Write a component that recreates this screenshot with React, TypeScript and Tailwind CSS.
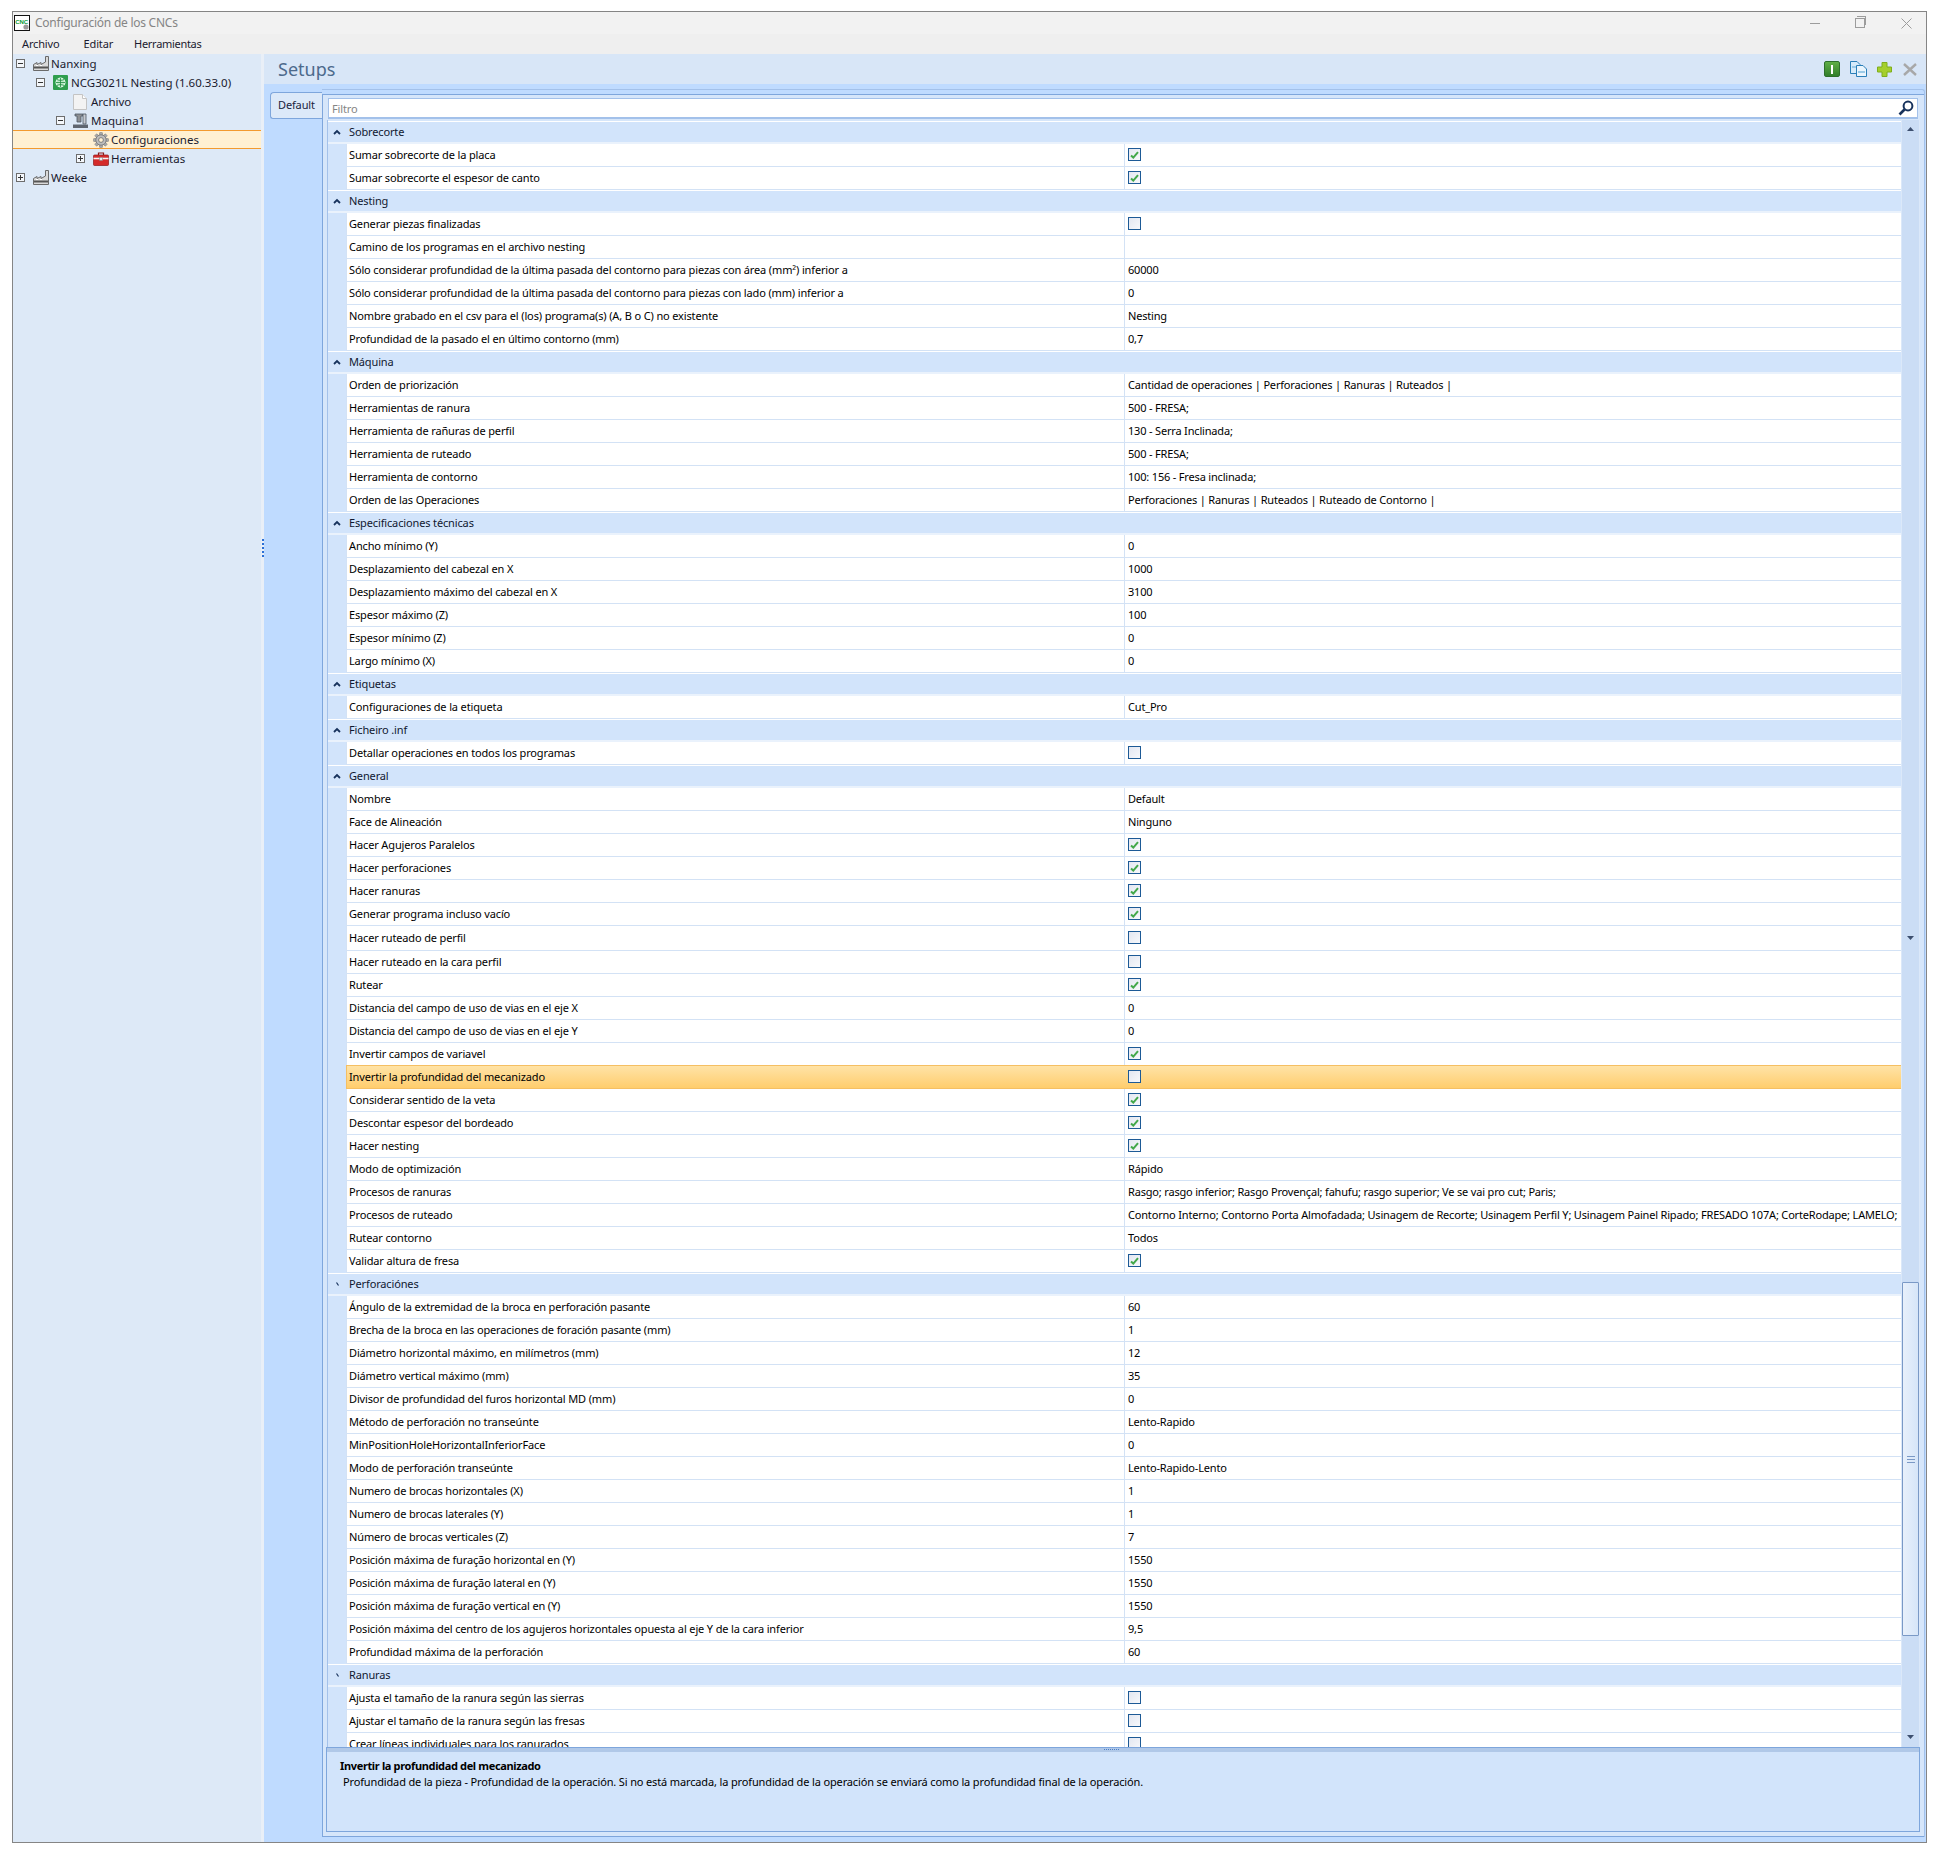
import React from "react";

type Row = [string, string | boolean, boolean?];

const sections: { title: string; open?: boolean; rows: Row[] }[] = [
  { title: "Sobrecorte", open: true, rows: [
    ["Sumar sobrecorte de la placa", true],
    ["Sumar sobrecorte el espesor de canto", true],
  ]},
  { title: "Nesting", open: true, rows: [
    ["Generar piezas finalizadas", false],
    ["Camino de los programas en el archivo nesting", ""],
    ["Sólo considerar profundidad de la última pasada del contorno para piezas con área (mm²) inferior a", "60000"],
    ["Sólo considerar profundidad de la última pasada del contorno para piezas con lado (mm) inferior a", "0"],
    ["Nombre grabado en el csv para el (los) programa(s) (A, B o C) no existente", "Nesting"],
    ["Profundidad de la pasado el en último contorno (mm)", "0,7"],
  ]},
  { title: "Máquina", open: true, rows: [
    ["Orden de priorización", "Cantidad de operaciones | Perforaciones | Ranuras | Ruteados |"],
    ["Herramientas de ranura", "500 - FRESA;"],
    ["Herramienta de rañuras de perfil", "130 - Serra Inclinada;"],
    ["Herramienta de ruteado", "500 - FRESA;"],
    ["Herramienta de contorno", "100: 156 - Fresa inclinada;"],
    ["Orden de las Operaciones", "Perforaciones | Ranuras | Ruteados | Ruteado de Contorno |"],
  ]},
  { title: "Especificaciones técnicas", open: true, rows: [
    ["Ancho mínimo (Y)", "0"],
    ["Desplazamiento del cabezal en X", "1000"],
    ["Desplazamiento máximo del cabezal en X", "3100"],
    ["Espesor máximo (Z)", "100"],
    ["Espesor mínimo (Z)", "0"],
    ["Largo mínimo (X)", "0"],
  ]},
  { title: "Etiquetas", open: true, rows: [["Configuraciones de la etiqueta", "Cut_Pro"]] },
  { title: "Ficheiro .inf", open: true, rows: [["Detallar operaciones en todos los programas", false]] },
  { title: "General", open: true, rows: [
    ["Nombre", "Default"],
    ["Face de Alineación", "Ninguno"],
    ["Hacer Agujeros Paralelos", true],
    ["Hacer perforaciones", true],
    ["Hacer ranuras", true],
    ["Generar programa incluso vacío", true],
    ["Hacer ruteado de perfil", false, true],
    ["Hacer ruteado en la cara perfil", false],
    ["Rutear", true],
    ["Distancia del campo de uso de vias en el eje X", "0"],
    ["Distancia del campo de uso de vias en el eje Y", "0"],
    ["Invertir campos de variavel", true],
    ["Invertir la profundidad del mecanizado", false],
    ["Considerar sentido de la veta", true],
    ["Descontar espesor del bordeado", true],
    ["Hacer nesting", true],
    ["Modo de optimización", "Rápido"],
    ["Procesos de ranuras", "Rasgo; rasgo inferior; Rasgo Provençal; fahufu; rasgo superior; Ve se vai pro cut; Paris;"],
    ["Procesos de ruteado", "Contorno Interno; Contorno Porta Almofadada; Usinagem de Recorte; Usinagem Perfil Y; Usinagem Painel Ripado; FRESADO 107A; CorteRodape; LAMELO;"],
    ["Rutear contorno", "Todos"],
    ["Validar altura de fresa", true],
  ]},
  { title: "Perforaciónes", rows: [
    ["Ángulo de la extremidad de la broca en perforación pasante", "60"],
    ["Brecha de la broca en las operaciones de foración pasante (mm)", "1"],
    ["Diámetro horizontal máximo, en milímetros (mm)", "12"],
    ["Diámetro vertical máximo (mm)", "35"],
    ["Divisor de profundidad del furos horizontal MD (mm)", "0"],
    ["Método de perforación no transeúnte", "Lento-Rapido"],
    ["MinPositionHoleHorizontalInferiorFace", "0"],
    ["Modo de perforación transeúnte", "Lento-Rapido-Lento"],
    ["Numero de brocas horizontales (X)", "1"],
    ["Numero de brocas laterales (Y)", "1"],
    ["Número de brocas verticales (Z)", "7"],
    ["Posición máxima de furação horizontal en (Y)", "1550"],
    ["Posición máxima de furação lateral en (Y)", "1550"],
    ["Posición máxima de furação vertical en (Y)", "1550"],
    ["Posición máxima del centro de los agujeros horizontales opuesta al eje Y de la cara inferior", "9,5"],
    ["Profundidad máxima de la perforación", "60"],
  ]},
  { title: "Ranuras", rows: [
    ["Ajusta el tamaño de la ranura según las sierras", false],
    ["Ajustar el tamaño de la ranura según las fresas", false],
    ["Crear líneas individuales para los ranurados", false],
  ]},
];

const SELECTED = "Invertir la profundidad del mecanizado";

function Expander({ open }: { open?: boolean }) {
  return (
    <span className="w-[9px] h-[9px] border border-[#6d6d6d] bg-[#f4f7fb] flex items-center justify-center relative shrink-0">
      <span className="w-[5px] h-px bg-[#333]" />
      {!open && <span className="absolute w-px h-[5px] bg-[#333]" />}
    </span>
  );
}

function Factory() {
  return (
    <svg width="16" height="15" viewBox="0 0 16 15" className="shrink-0">
      <path d="M0.5 14.5V8.5L4 6.5V8.5L8 6.5V8.5L12.5 6V0.5H15.5V14.5Z" fill="#d9d9d9" stroke="#6a6a6a" />
      <path d="M1 11.5H15" stroke="#555" strokeWidth="2" />
      <path d="M3 9.5h2M7 9.5h2" stroke="#fff" />
    </svg>
  );
}

function MachineGreen() {
  return (
    <svg width="15" height="15" viewBox="0 0 15 15" className="shrink-0">
      <rect width="15" height="15" rx="1" fill="#2f9e4f" />
      <circle cx="7.5" cy="7.5" r="4.5" fill="#bfeccb" stroke="#e8fff0" />
      <path d="M3 7.5h9M7.5 3v9M4 4.5c2 1.2 5 1.2 7 0M4 10.5c2-1.2 5-1.2 7 0" stroke="#1f8a40" fill="none" strokeWidth="0.8" />
    </svg>
  );
}

function Doc() {
  return (
    <svg width="14" height="16" viewBox="0 0 14 16" className="shrink-0">
      <path d="M0.5 0.5H9.5L13.5 4.5V15.5H0.5Z" fill="#f3f3f3" stroke="#c4c4c4" />
      <path d="M9.5 0.5V4.5H13.5" fill="#fff" stroke="#c4c4c4" />
    </svg>
  );
}

function Machine() {
  return (
    <svg width="15" height="15" viewBox="0 0 15 15" className="shrink-0">
      <path d="M2 1h8v2H8v6H4V3H2z" fill="#8d9094" stroke="#4b5563" strokeWidth="0.8" />
      <path d="M10 1h3v10h-3z" fill="#c7cbd1" stroke="#4b5563" strokeWidth="0.8" />
      <path d="M0 11.5h15V15H0z" fill="#5f6670" />
    </svg>
  );
}

function Gear() {
  const teeth = [0, 45, 90, 135];
  return (
    <svg width="16" height="16" viewBox="0 0 16 16" className="shrink-0">
      {teeth.map(a => (
        <rect key={a} x="6.5" y="0.5" width="3" height="15" rx="0.5" fill="#a9a9a9" stroke="#7b7b7b" strokeWidth="0.5" transform={`rotate(${a} 8 8)`} />
      ))}
      <circle cx="8" cy="8" r="5.2" fill="#bdbdbd" stroke="#7d7d7d" />
      <circle cx="8" cy="8" r="2.4" fill="#fff0d2" stroke="#7d7d7d" />
    </svg>
  );
}

function Toolbox() {
  return (
    <svg width="16" height="14" viewBox="0 0 16 14" className="shrink-0">
      <path d="M5.5 3V1h5v2" fill="none" stroke="#8a1c1c" strokeWidth="1.2" />
      <rect x="0.5" y="3" width="15" height="10.5" rx="1" fill="#d42a2a" stroke="#8f1818" strokeWidth="0.7" />
      <path d="M0.5 6.5h15" stroke="#f3f3f3" strokeWidth="1.6" />
      <rect x="6.5" y="5.5" width="3" height="3" fill="#eee" stroke="#777" strokeWidth="0.5" />
    </svg>
  );
}

function TreeRow({ indent, icon, label, exp, open, selected }: { indent: string; icon: React.ReactNode; label: string; exp?: boolean; open?: boolean; selected?: boolean }) {
  return (
    <div className={`h-[19px] flex items-center text-[11.5px] text-[#1a1a2e] ${indent} ${selected ? "bg-[#fff0d2] border-y border-[#f39a2e]" : ""}`}>
      <span className="w-[9px] mr-[8px] flex">{exp && <Expander open={open} />}</span>
      <span className="w-[17px] flex">{icon}</span>
      <span className="whitespace-nowrap ml-px">{label}</span>
    </div>
  );
}

function Check({ on }: { on: boolean }) {
  return (
    <span className="w-[13px] h-[13px] border border-[#1d5a96] bg-gradient-to-br from-[#e3e7f1] to-[#f7f8fb] flex items-center justify-center shrink-0">
      {on && (
        <svg width="9" height="8" viewBox="0 0 9 8">
          <path d="M1 4.5L3.3 6.6L8 1.2" fill="none" stroke="#43a84a" strokeWidth="2" />
        </svg>
      )}
    </span>
  );
}

function SectionHeader({ title, open }: { title: string; open?: boolean }) {
  return (
    <div className="h-[23px] border-t border-white bg-[#d2e4fb] border-b-2 border-b-[#eaf2fc] flex items-center shrink-0">
      <span className="w-[18px] flex justify-center -mt-px">
        {open ? (
          <svg width="8" height="6" viewBox="0 0 8 6"><path d="M1 5L4 2L7 5" fill="none" stroke="#17325c" strokeWidth="1.8" /></svg>
        ) : (
          <svg width="3" height="4" viewBox="0 0 3 4"><path d="M0.5 0.5L2.5 3.5" fill="none" stroke="#17325c" strokeWidth="1.2" /></svg>
        )}
      </span>
      <span className="pl-[3px] pb-px text-[#101830]">{title}</span>
    </div>
  );
}

function DataRow({ row }: { row: Row }) {
  const [label, value, tall] = row;
  const selected = label === SELECTED;
  return (
    <div className={`${tall ? "h-[25px]" : "h-[23px]"} flex shrink-0 bg-[#d2e4fb]`}>
      <div className="w-[18px] shrink-0" />
      <div className={`flex-1 flex min-w-0 border-l border-b ${selected ? "border-[#f5bf63] border-t -mt-px bg-gradient-to-b from-[#ffe3a6] to-[#ffcd6c]" : "border-[#d3e2f5] bg-white"}`}>
        <div className="w-[777px] shrink-0 pl-[2px] pb-px flex items-center whitespace-nowrap text-black">{label}</div>
        <div className={`flex-1 min-w-0 border-l ${selected ? "border-transparent" : "border-[#d3e2f5]"} flex items-center pl-[3px] pb-px tracking-[-0.18px] whitespace-nowrap overflow-hidden text-black`}>
          {typeof value === "boolean" ? <Check on={value} /> : value}
        </div>
      </div>
    </div>
  );
}

function Arrow({ up, className }: { up?: boolean; className?: string }) {
  return (
    <svg width="7" height="4" viewBox="0 0 7 4" className={`self-center shrink-0 ${className ?? ""}`}>
      <path d={up ? "M0 4L3.5 0L7 4Z" : "M0 0H7L3.5 4Z"} fill="#3d4f6f" />
    </svg>
  );
}

export default function App() {
  return (
    <div className="w-[1938px] h-[1861px] bg-white pt-[11px] pl-[12px] font-['Noto_Sans',sans-serif] text-[11px] tracking-[-0.14px] leading-none">
      <div className="w-[1915px] h-[1832px] border border-[#858585] flex flex-col overflow-hidden">
        {/* title bar */}
        <div className="h-[22px] bg-[#f2f2f2] flex items-center shrink-0 relative">
          <svg width="16" height="16" viewBox="0 0 16 16" className="ml-[1px] shrink-0">
            <rect x="0.5" y="0.5" width="15" height="15" fill="#fff" stroke="#111" />
            <circle cx="12" cy="12" r="2.6" fill="#9a9a9a" />
            <text x="1.3" y="9" fontSize="6" fontWeight="700" fill="#0a9a35" fontFamily="Liberation Sans, sans-serif">CNC</text>
          </svg>
          <span className="ml-[5px] text-[12px] tracking-[-0.25px] text-[#858585]">Configuración de los CNCs</span>
          <div className="ml-auto flex items-center">
            <span className="w-[10px] h-px bg-[#9c9c9c] mr-[35px]" />
            <span className="w-[10px] h-[10px] border border-[#9c9c9c] mr-[36px] relative">
              <span className="absolute -top-[3px] left-[1px] w-[9px] h-[9px] border-t border-r border-[#9c9c9c]" />
            </span>
            <svg width="11" height="11" viewBox="0 0 11 11" className="mr-[14px]"><path d="M0.5 0.5L10.5 10.5M10.5 0.5L0.5 10.5" stroke="#9c9c9c" /></svg>
          </div>
        </div>
        {/* menu */}
        <div className="h-[20px] bg-[#efefef] flex items-center text-[#1a1a2e] shrink-0 pl-[9px] pb-[2px]">
          <span className="mr-[24px]">Archivo</span>
          <span className="mr-[21px]">Editar</span>
          <span className="tracking-[-0.3px]">Herramientas</span>
        </div>
        <div className="flex-1 flex min-h-0">
          {/* tree */}
          <div className="w-[248px] shrink-0 bg-[#dde9f7] flex flex-col tracking-normal">
            <TreeRow indent="pl-[3px]" exp open icon={<Factory />} label="Nanxing" />
            <TreeRow indent="pl-[23px]" exp open icon={<MachineGreen />} label="NCG3021L Nesting (1.60.33.0)" />
            <TreeRow indent="pl-[43px]" icon={<Doc />} label="Archivo" />
            <TreeRow indent="pl-[43px]" exp open icon={<Machine />} label="Maquina1" />
            <TreeRow indent="pl-[63px]" selected icon={<Gear />} label="Configuraciones" />
            <TreeRow indent="pl-[63px]" exp icon={<Toolbox />} label="Herramientas" />
            <TreeRow indent="pl-[3px]" exp icon={<Factory />} label="Weeke" />
          </div>
          {/* splitter */}
          <div className="w-[3px] shrink-0 bg-[#e9eff7] flex flex-col items-center gap-[2px] pt-[485px]">
            {[0, 1, 2, 3, 4].map(i => <span key={i} className="w-[2px] h-[2px] bg-[#2a6fd6]" />)}
          </div>
          {/* right pane */}
          <div className="flex-1 min-w-0 flex flex-col bg-[#bfdbff]">
            <div className="h-[30px] shrink-0 bg-[#d8e6f7] flex items-center pl-[14px]">
              <span className="text-[18px] tracking-normal text-[#4d6a8c]">Setups</span>
              <div className="ml-auto flex items-center">
                <span className="w-[16px] h-[16px] rounded-[2px] bg-gradient-to-b from-[#5fae45] to-[#327f2c] border border-[#2e6f2c] flex items-center justify-center mr-[10px]">
                  <span className="w-[2px] h-[9px] bg-white" />
                </span>
                <svg width="17" height="16" viewBox="0 0 17 16" className="mr-[10px]">
                  <path d="M0.5 0.5H7L10 3.5V12.5H0.5Z" fill="#d6ebfa" stroke="#2a7fb8" />
                  <path d="M6.5 4.5H13L16.5 8V15.5H6.5Z" fill="#eaf5fd" stroke="#2a7fb8" />
                  <path d="M8 11h7M2 6h4" stroke="#9ccbe8" strokeWidth="2" />
                </svg>
                <svg width="15" height="15" viewBox="0 0 15 15" className="mr-[11px]">
                  <path d="M5 0.5H10V5H14.5V10H10V14.5H5V10H0.5V5H5Z" fill="#a5cf2c" stroke="#7fae1c" />
                </svg>
                <svg width="14" height="13" viewBox="0 0 14 13" className="mr-[9px]">
                  <path d="M1 1L13 12M13 1L1 12" stroke="#a8a8a8" strokeWidth="2.4" />
                </svg>
              </div>
            </div>
            <div className="flex-1 min-h-0 flex pl-[6px] pr-[1px] pt-[5px] pb-[5px]">
              <div className="w-[52px] shrink-0 pt-[3px]">
                <div className="h-[27px] border border-r-0 border-[#7ea6dc] rounded-tl-[4px] rounded-bl-[3px] bg-[#dce9f9] flex items-center pl-[7px] pb-[2px] text-[#1a2340]">Default</div>
              </div>
              <div className="flex-1 min-w-0 flex flex-col border border-b-0 border-[#a3c1ea] border-l-0 rounded-tr-[3px] pt-[4px]">
                <div className="flex-1 min-h-0 flex flex-col border-l border-t border-b border-[#7ea6dc] bg-[#d6e6fa] pl-[4px] pr-[4px] pt-[3px] pb-[4px]">
                  {/* filter */}
                  <div className="h-[21px] shrink-0 bg-white border border-[#a3c1ea] border-b-2 ml-[1px] mr-[2px] flex items-center pl-[3px] pr-[3px] text-[#858585]">
                    Filtro
                    <svg width="16" height="16" viewBox="0 0 16 16" className="ml-auto">
                      <circle cx="10" cy="6" r="4.4" fill="#fff" stroke="#17325c" strokeWidth="2" />
                      <path d="M6.5 9.5L1.5 14.5" stroke="#17325c" strokeWidth="2.6" />
                    </svg>
                  </div>
                  <div className="flex-1 min-h-0 flex mt-[1px]">
                    {/* grid */}
                    <div className="flex-1 min-w-0 flex flex-col border-l border-[#a3c1ea] overflow-hidden pt-[1px]">
                      {sections.map(s => (
                        <React.Fragment key={s.title}>
                          <SectionHeader title={s.title} open={s.open} />
                          {s.rows.map(r => <DataRow key={r[0]} row={r} />)}
                        </React.Fragment>
                      ))}
                    </div>
                    {/* scrollbar */}
                    <div className="w-[19px] shrink-0 bg-[#cbddf5] border-x border-[#dbe8f9] flex flex-col">
                      <Arrow up className="mt-[7px]" />
                      <Arrow className="mt-[805px]" />
                      <div className="mt-[342px] h-[354px] shrink-0 border border-[#7a99c6] rounded-[1px] bg-gradient-to-r from-[#e8f0fb] to-[#d6e5f8] flex flex-col items-center justify-center gap-[2px]">
                        {[0, 1, 2].map(i => <span key={i} className="w-[8px] h-px bg-[#7a99c6]" />)}
                      </div>
                      <Arrow className="mt-[99px]" />
                    </div>
                  </div>
                  {/* description */}
                  <div className="h-[5px] shrink-0 -ml-px bg-[#b0c8e8] border-t border-[#7ea6dc] border-x flex justify-center gap-[1px]">
                    <span className="w-[15px] border-t border-dotted border-[#4e7fc4] mt-[1px] -translate-x-[12px]" />
                  </div>
                  <div className="h-[80px] shrink-0 -ml-px bg-[#d2e4fb] border border-t-0 border-[#7ea6dc] pl-[13px] pt-[8px] text-black">
                    <div className="font-bold tracking-[-0.35px]">Invertir la profundidad del mecanizado</div>
                    <div className="pl-[3px] mt-[5px]">Profundidad de la pieza - Profundidad de la operación. Si no está marcada, la profundidad de la operación se enviará como la profundidad final de la operación.</div>
                  </div>
                </div>
              </div>
            </div>
          </div>
        </div>
      </div>
    </div>
  );
}
